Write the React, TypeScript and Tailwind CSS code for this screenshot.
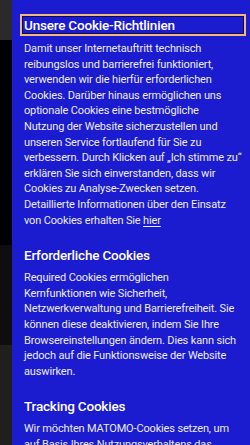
export default function App() {
  return (
    <div className="w-[250px] h-[445px] overflow-hidden flex bg-black" style={{ fontFamily: 'Roboto, "Noto Sans", sans-serif' }}>
      {/* page behind the overlay */}
      <div className="w-[12px] flex-shrink-0 flex flex-col">
        <div className="h-[40px] bg-[#2a2a2a]" />
        <div className="h-[205px] bg-black" />
        <div className="h-[100px] bg-[#0e0e0e]" />
        <div className="flex-1 bg-[#1f1f1b]" />
      </div>

      {/* cookie panel */}
      <div className="flex-1 bg-[#1b1bcf] pl-[12px] pr-[8.5px] pt-[16px] text-[#ececf6]">
        <h2 className="text-[13.5px] leading-[18px] tracking-[-0.2px] text-white font-medium px-[2px] -mx-[2px] outline outline-2 outline-[#f3b878] shadow-[inset_0_0_0_1px_#0a0a60]">
          Unsere Cookie-Richtlinien
        </h2>
        <p className="mt-[7px] text-[11px] leading-[15.6px] tracking-[-0.15px]">
          Damit unser Internetauftritt technisch reibungslos und barrierefrei funktioniert, verwenden wir die hierfür erforderlichen Cookies. Darüber hinaus ermöglichen uns optionale Cookies eine bestmögliche Nutzung der Website sicherzustellen und unseren Service fortlaufend für Sie zu verbessern. Durch Klicken auf „Ich stimme zu“ erklären Sie sich einverstanden, dass wir Cookies zu Analyse-Zwecken setzen. Detaillierte Informationen über den Einsatz von Cookies erhalten Sie <span className="underline underline-offset-2">hier</span>
        </p>

        <h3 className="mt-[18px] text-[13.5px] leading-[18px] tracking-[-0.2px] text-white font-medium">Erforderliche Cookies</h3>
        <p className="mt-[6px] text-[11px] leading-[15.6px] tracking-[-0.15px]">
          Required Cookies ermöglichen Kernfunktionen wie Sicherheit, Netzwerkverwaltung und Barrierefreiheit. Sie können diese deaktivieren, indem Sie Ihre Browsereinstellungen ändern. Dies kann sich jedoch auf die Funktionsweise der Website auswirken.
        </p>

        <h3 className="mt-[18px] text-[13.5px] leading-[18px] tracking-[-0.2px] text-white font-medium">Tracking Cookies</h3>
        <p className="mt-[6px] text-[11px] leading-[15.6px] tracking-[-0.15px]">
          Wir möchten MATOMO-Cookies setzen, um auf Basis Ihres Nutzungsverhaltens das Angebot unserer Website zu verbessern.
        </p>
      </div>
    </div>
  );
}
